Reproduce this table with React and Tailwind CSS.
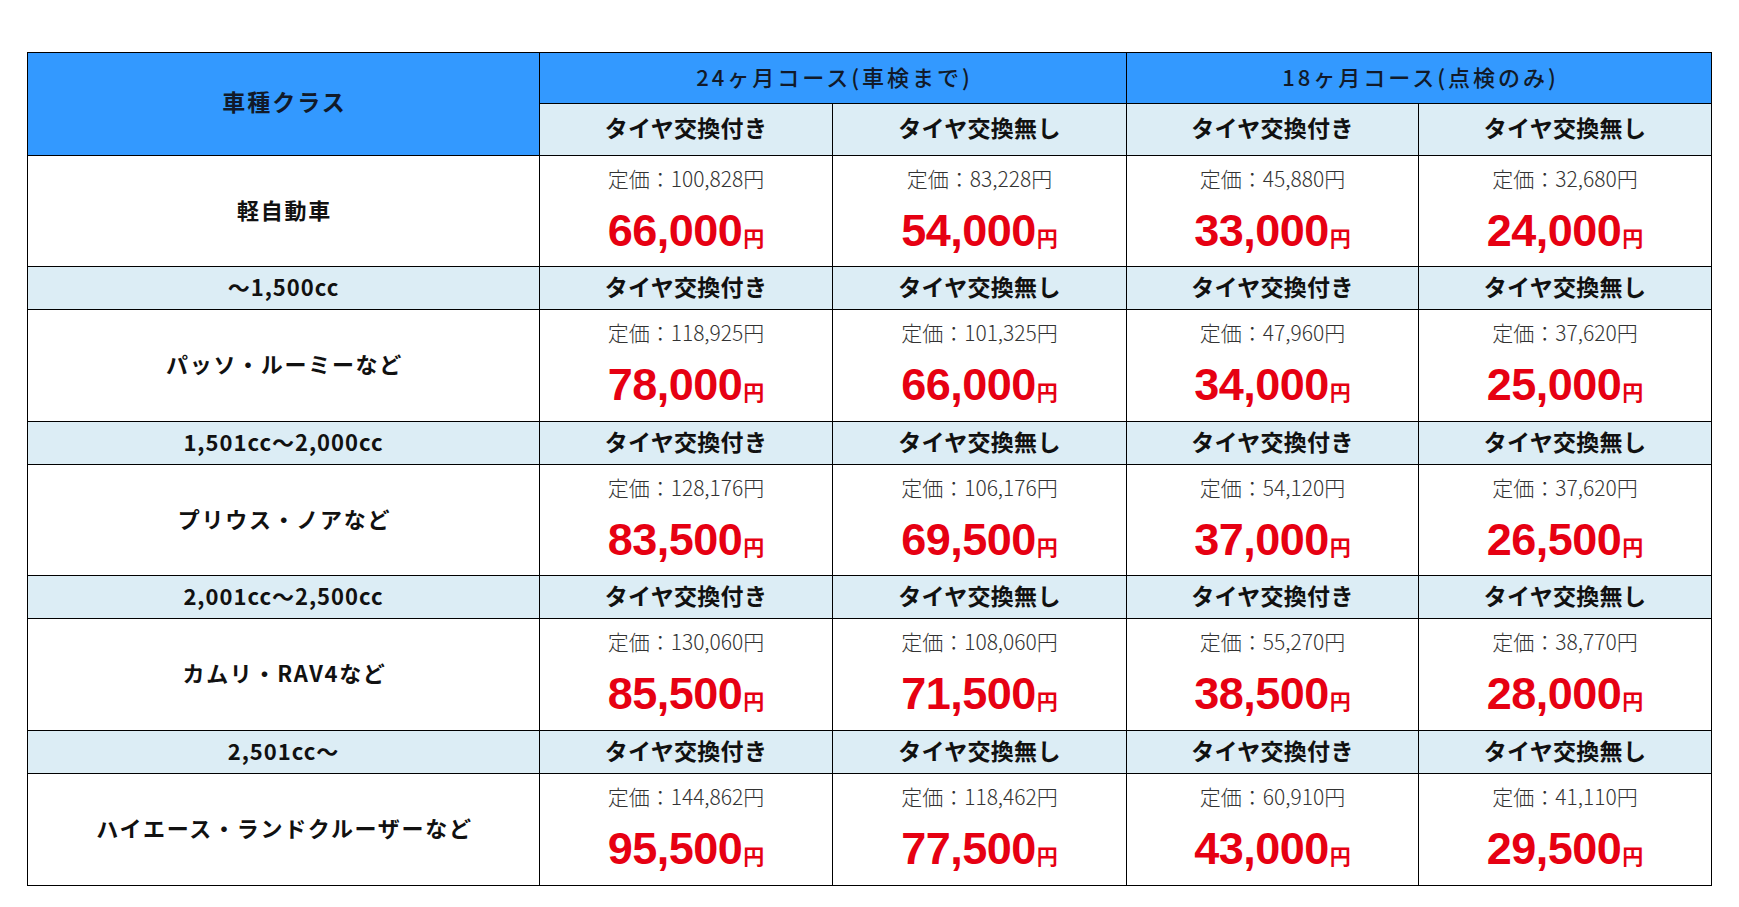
import React from 'react';

const jp = { fontFamily: '"Noto Sans CJK JP", "Noto Sans", sans-serif' };

const rows = [
  {
    label: '軽自動車',
    prices: [
      ['100,828', '66,000'],
      ['83,228', '54,000'],
      ['45,880', '33,000'],
      ['32,680', '24,000'],
    ],
  },
  {
    band: '〜1,500cc',
    label: 'パッソ・ルーミーなど',
    prices: [
      ['118,925', '78,000'],
      ['101,325', '66,000'],
      ['47,960', '34,000'],
      ['37,620', '25,000'],
    ],
  },
  {
    band: '1,501cc〜2,000cc',
    label: 'プリウス・ノアなど',
    prices: [
      ['128,176', '83,500'],
      ['106,176', '69,500'],
      ['54,120', '37,000'],
      ['37,620', '26,500'],
    ],
  },
  {
    band: '2,001cc〜2,500cc',
    label: 'カムリ・RAV4など',
    prices: [
      ['130,060', '85,500'],
      ['108,060', '71,500'],
      ['55,270', '38,500'],
      ['38,770', '28,000'],
    ],
  },
  {
    band: '2,501cc〜',
    label: 'ハイエース・ランドクルーザーなど',
    prices: [
      ['144,862', '95,500'],
      ['118,462', '77,500'],
      ['60,910', '43,000'],
      ['41,110', '29,500'],
    ],
  },
];

const options = ['タイヤ交換付き', 'タイヤ交換無し', 'タイヤ交換付き', 'タイヤ交換無し'];

function OptionCell({ text }) {
  return (
    <div className="bg-[#dcedf5] flex items-center justify-center pb-[4px] text-[23px] font-bold tracking-[0.3px] text-[#111]">
      {text}
    </div>
  );
}

function BandRow({ band }) {
  return (
    <>
      <div className="bg-[#dcedf5] flex items-center justify-center pb-[4px] text-[22px] font-bold tracking-[1px] text-[#111]">
        {band}
      </div>
      {options.map((o, i) => (
        <OptionCell key={i} text={o} />
      ))}
    </>
  );
}

function PriceCell({ list, sale }) {
  return (
    <div className="bg-white flex flex-col items-center pt-[9px]">
      <div className="text-[21px] leading-[26px] font-light text-[#333]">定価：{list}円</div>
      <div className="mt-[18px] flex items-baseline text-[#e60012] font-bold">
        <span className="text-[45px] leading-[44px] tracking-[-0.5px]" style={{ fontFamily: '"Liberation Sans", Arial, sans-serif' }}>
          {sale}
        </span>
        <span className="text-[21px] leading-none ml-[1px]">円</span>
      </div>
    </div>
  );
}

export default function App() {
  return (
    <div className="min-h-screen bg-white pt-[52px] pl-[27px]" style={jp}>
      <div className="w-[1685px] bg-black p-px grid gap-px grid-cols-[511px_292px_293px_291px_292px] grid-rows-[50px_51px_110px_42px_111px_42px_110px_42px_111px_42px_111px]">
        <div className="row-span-2 bg-[#3399ff] flex items-center justify-center pb-[6px] pl-[2px] text-[23px] font-bold tracking-[2px] text-[#111a2a]">
          車種クラス
        </div>
        <div className="col-span-2 bg-[#3399ff] flex items-center justify-center pb-[4px] pl-[3px] text-[22px] font-medium tracking-[3px] text-[#111a2a]">
          24ヶ月コース(車検まで)
        </div>
        <div className="col-span-2 bg-[#3399ff] flex items-center justify-center pb-[4px] pl-[3px] text-[22px] font-medium tracking-[3px] text-[#111a2a]">
          18ヶ月コース(点検のみ)
        </div>
        {options.map((o, i) => (
          <OptionCell key={i} text={o} />
        ))}

        {rows.map((r, idx) => (
          <React.Fragment key={idx}>
            {r.band && <BandRow band={r.band} />}
            <div className="bg-white flex items-center justify-center pb-[4px] pl-[2px] text-[22px] font-bold tracking-[1.7px] text-[#111]">
              {r.label}
            </div>
            {r.prices.map(([list, sale], j) => (
              <PriceCell key={j} list={list} sale={sale} />
            ))}
          </React.Fragment>
        ))}
      </div>
    </div>
  );
}
